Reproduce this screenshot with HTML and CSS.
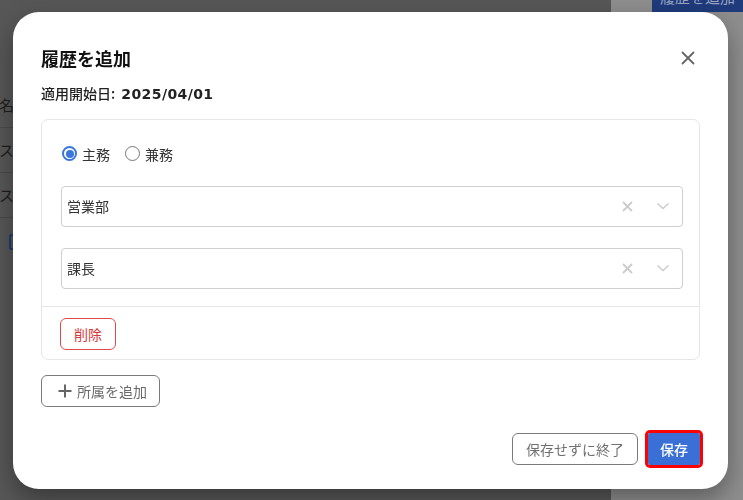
FILE: index.html
```html
<!DOCTYPE html>
<html lang="ja">
<head>
<meta charset="utf-8">
<title>履歴を追加</title>
<link rel="stylesheet" href="styles.css">
</head>
<body>
<div class="page">
  <div class="main">
    <div class="row">名</div>
    <div class="row">ス</div>
    <div class="row">ス</div>
    <div class="row-last"><span class="bracket"></span></div>
  </div>
  <div class="side">
    <div class="side-btn">履歴を追加</div>
  </div>
</div>

<div class="backdrop">
  <div class="modal">
    <div class="modal-head">
      <h2 class="title">履歴を追加</h2>
      <button class="close" aria-label="閉じる">
        <svg width="14" height="14" viewBox="0 0 14 14"><path d="M1.5 1.5 L12.5 12.5 M12.5 1.5 L1.5 12.5" stroke="#666" stroke-width="1.8" fill="none" stroke-linecap="round"/></svg>
      </button>
    </div>
    <div class="date"><span class="date-label">適用開始日:</span> <span class="date-val">2025/04/01</span></div>

    <div class="card">
      <div class="card-body">
        <div class="radios">
          <label class="radio"><span class="dot on"></span>主務</label>
          <label class="radio"><span class="dot"></span>兼務</label>
        </div>
        <div class="select">
          <span class="sel-text">営業部</span>
          <span class="sel-icons">
            <svg class="ic-x" width="11" height="11" viewBox="0 0 11 11"><path d="M1 1 L10 10 M10 1 L1 10" stroke="#cccccc" stroke-width="1.8" fill="none"/></svg>
            <svg class="ic-chev" width="14" height="8" viewBox="0 0 14 8"><path d="M1.5 1.5 L7 6.5 L12.5 1.5" stroke="#cccccc" stroke-width="1.6" fill="none"/></svg>
          </span>
        </div>
        <div class="select">
          <span class="sel-text">課長</span>
          <span class="sel-icons">
            <svg class="ic-x" width="11" height="11" viewBox="0 0 11 11"><path d="M1 1 L10 10 M10 1 L1 10" stroke="#cccccc" stroke-width="1.8" fill="none"/></svg>
            <svg class="ic-chev" width="14" height="8" viewBox="0 0 14 8"><path d="M1.5 1.5 L7 6.5 L12.5 1.5" stroke="#cccccc" stroke-width="1.6" fill="none"/></svg>
          </span>
        </div>
      </div>
      <div class="card-foot">
        <button class="btn-del">削除</button>
      </div>
    </div>

    <button class="btn-add">
      <svg width="14" height="14" viewBox="0 0 14 14"><path d="M7 0.5 V13.5 M0.5 7 H13.5" stroke="#666" stroke-width="2" fill="none"/></svg>
      <span>所属を追加</span>
    </button>

    <div class="modal-foot">
      <button class="btn-cancel">保存せずに終了</button>
      <button class="btn-save">保存</button>
    </div>
  </div>
</div>
</body>
</html>
```

FILE: styles.css
```css
* { box-sizing: border-box; }
html, body { margin: 0; padding: 0; }
body {
  width: 743px;
  height: 500px;
  overflow: hidden;
  font-family: "Noto Sans CJK JP", "Noto Sans", sans-serif;
  color: #333;
}
.page {
  display: grid;
  grid-template-columns: 611px 1fr;
  height: 500px;
}
.main {
  background: #575757;
  padding-top: 83px;
}
.row {
  height: 45px;
  border-bottom: 1px solid #4a4a4a;
  font-size: 15px;
  line-height: 44px;
  color: #1e1e1e;
  margin-left: -1px;
}
.row-last {
  padding: 16px 0 0 9px;
}
.bracket {
  display: block;
  width: 14px;
  height: 16px;
  border: 2px solid #1f3a78;
  border-radius: 2px;
}
.side {
  background: #8e8e8e;
  display: flex;
  justify-content: flex-end;
  align-items: flex-start;
}
.side-btn {
  margin-top: -18px;
  width: 91px;
  height: 30px;
  background: #1f3b7c;
  color: #9aa6c4;
  font-size: 15px;
  line-height: 30px;
  text-align: center;
  white-space: nowrap;
}
.backdrop {
  position: fixed;
  inset: 0;
  display: flex;
  align-items: center;
  justify-content: center;
  padding-right: 2px;
}
.modal {
  width: 715px;
  height: 477px;
  background: #fff;
  border-radius: 26px;
  box-shadow: 0 10px 24px rgba(0, 0, 0, 0.35);
  padding: 33px 28px 24px 28px;
  display: flex;
  flex-direction: column;
}
.modal-head {
  display: flex;
  justify-content: space-between;
  align-items: center;
  height: 26px;
}
.title {
  margin: 0;
  font-size: 18px;
  font-weight: 700;
  color: #111;
  line-height: 26px;
}
.close {
  width: 24px;
  height: 24px;
  border: 0;
  background: transparent;
  padding: 0;
  display: flex;
  align-items: center;
  justify-content: center;
}
.date {
  margin-top: 12px;
  font-size: 14px;
  line-height: 20px;
  color: #222;
}
.date-label { font-weight: 500; }
.date-val {
  font-family: "DejaVu Sans", "Noto Sans", sans-serif;
  font-weight: 700;
  font-size: 14px;
  letter-spacing: 0.4px;
  margin-left: 3px;
}
.card {
  margin-top: 15px;
  border: 1px solid #e6e6e6;
  border-radius: 7px;
}
.card-body {
  padding: 23px 16px 17px 19px;
  display: flex;
  flex-direction: column;
  gap: 20px;
}
.card-body .radios + .select { margin-top: 1px; }
.radios {
  display: flex;
  gap: 15px;
  height: 22px;
  align-items: center;
  padding-left: 1px;
}
.radio {
  display: flex;
  align-items: center;
  gap: 5px;
  font-size: 14px;
  color: #333;
}
.dot {
  width: 15px;
  height: 15px;
  border-radius: 50%;
  border: 1.5px solid #777;
  display: flex;
  align-items: center;
  justify-content: center;
}
.dot.on {
  border: 2px solid #3a76db;
}
.dot.on::after {
  content: "";
  width: 8px;
  height: 8px;
  border-radius: 50%;
  background: #3a76db;
}
.select {
  height: 41px;
  border: 1px solid #cfcfcf;
  border-radius: 4px;
  display: flex;
  align-items: center;
  justify-content: space-between;
  padding: 0 12px 0 5px;
}
.card-body .select + .select { margin-top: 1px; }
.sel-text {
  font-size: 14px;
  color: #333;
}
.sel-icons {
  display: flex;
  align-items: center;
  gap: 23px;
}
.card-foot {
  border-top: 1px solid #e6e6e6;
  padding: 11px 18px 9px 18px;
}
button {
  font-family: "Noto Sans CJK JP", "Noto Sans", sans-serif;
  cursor: pointer;
}
.btn-del {
  height: 32px;
  padding: 0 13px;
  border: 1px solid #de4b4b;
  border-radius: 6px;
  background: #fff;
  color: #d83a3a;
  font-size: 14px;
}
.btn-add {
  margin-top: 15px;
  align-self: flex-start;
  height: 32px;
  padding: 0 12px 0 16px;
  border: 1px solid #7a7a7a;
  border-radius: 6px;
  background: #fff;
  color: #6a6a6a;
  font-size: 14px;
  display: flex;
  align-items: center;
  gap: 5px;
}
.modal-foot {
  margin-top: auto;
  display: flex;
  justify-content: flex-end;
  align-items: center;
  gap: 10px;
}
.btn-cancel {
  height: 32px;
  padding: 0 13px;
  border: 1px solid #7a7a7a;
  border-radius: 6px;
  background: #fff;
  color: #707070;
  font-size: 14px;
}
.btn-save {
  height: 32px;
  padding: 0 12px;
  border: 0;
  border-radius: 2px;
  background: #3a6fd6;
  color: #fff;
  font-size: 14px;
  font-weight: 500;
  outline: 3px solid #ff0000;
  outline-offset: 0;
}
```
